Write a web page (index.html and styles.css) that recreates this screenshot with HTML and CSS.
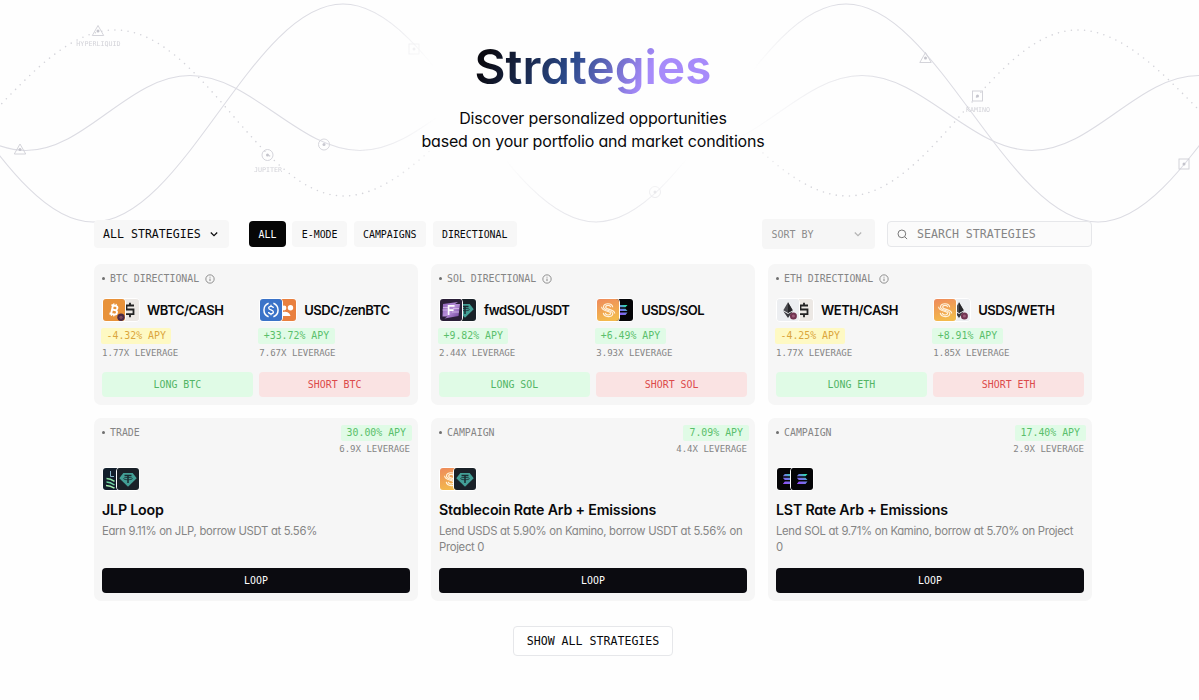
FILE: index.html
```html
<!DOCTYPE html>
<html lang="en">
<head>
  <meta charset="UTF-8">
  <meta name="viewport" content="width=device-width, initial-scale=1">
  <title>Strategies</title>
  <link rel="stylesheet" href="styles.css">
</head>
<body>
  <!-- Icon sprite -->
  <svg class="sprite" aria-hidden="true">
    <defs>
      <linearGradient id="g-sol" x1="0" y1="1" x2="1" y2="0">
        <stop offset="0" stop-color="#9945ff"/>
        <stop offset="0.55" stop-color="#6b7fe0"/>
        <stop offset="1" stop-color="#19fb9b"/>
      </linearGradient>
      <linearGradient id="g-usds" x1="0" y1="0" x2="0.3" y2="1">
        <stop offset="0" stop-color="#ee8a5c"/>
        <stop offset="1" stop-color="#f3b94c"/>
      </linearGradient>
      <linearGradient id="g-fwd" x1="0" y1="0" x2="1" y2="1">
        <stop offset="0" stop-color="#8d62b8"/>
        <stop offset="0.5" stop-color="#b78fd8"/>
        <stop offset="1" stop-color="#6b3d98"/>
      </linearGradient>
    </defs>
    <symbol id="t-btc" viewBox="0 0 22 22">
      <rect width="22" height="22" fill="#e8923a"/>
      <g fill="none" stroke="#fff" stroke-width="1.9" transform="rotate(12 11 11)">
        <path d="M7.5 6.6h4.3a2.1 2.1 0 0 1 0 4.3H9.2h3a2.2 2.2 0 0 1 0 4.5H7.3M9 6.5v9"/>
        <path d="M9.6 4.6v2M12 4.6v2M9.6 15.4v2M12 15.4v2" stroke-width="1.2"/>
      </g>
      <circle cx="18" cy="18.3" r="3.7" fill="#4a2a45"/>
      <circle cx="18" cy="18.3" r="1.6" fill="#7d4a5c"/>
    </symbol>
    <symbol id="t-cash" viewBox="0 0 22 22">
      <rect width="22" height="22" fill="#ece8e4"/>
      <path d="M17 6.500H9.500v4h7v4.700H8.500M13 3.800v2.700M13 15.200v3M8.500 10.500h3" fill="none" stroke="#222" stroke-width="1.800"/>
    </symbol>
    <symbol id="t-usdc" viewBox="0 0 22 22">
      <rect width="22" height="22" fill="#3b73c8"/>
      <g fill="none" stroke="#fff" stroke-width="1.5">
        <path d="M8.600 4.200a7.300 7.300 0 0 0 0 13.600M13.400 4.200a7.300 7.300 0 0 1 0 13.600"/>
        <path d="M13.300 9c0-2.300-4.600-2.300-4.600 0 0 2.400 4.700 1.500 4.700 4 0 2.400-4.800 2.400-4.800 0M11 5.800v1.500M11 14.700v1.500" stroke-width="1.300"/>
      </g>
    </symbol>
    <symbol id="t-zen" viewBox="0 0 22 22">
      <rect width="22" height="22" fill="#e9803f"/>
      <g fill="#fff">
        <circle cx="10" cy="9" r="2.400"/>
        <circle cx="16.500" cy="8.800" r="2.700"/>
        <path d="M6 17c0-4.500 7-6 9.500-2.200L16.500 17z"/>
      </g>
    </symbol>
    <symbol id="t-fwd" viewBox="0 0 22 22">
      <rect width="22" height="22" fill="#2b1f38"/>
      <path d="M3 5l15-2-3 2h5l-1.500 12-14 2.500 3-2H2.500z" fill="url(#g-fwd)"/>
      <path d="M3 8.500h5M2.500 11h5M13 9.500h6M12 13h7" stroke="#e2cdf2" stroke-width="0.700"/>
      <path d="M8.600 16V6.900h6M8.600 11.200h5" fill="none" stroke="#fff" stroke-width="1.700"/>
    </symbol>
    <symbol id="t-usdt" viewBox="0 0 22 22">
      <rect width="22" height="22" fill="#1a2128"/>
      <path d="M6.300 5h9.400l4 5.300L11 18.800l-8.700-8.500z" fill="#439f96"/>
      <path d="M7.500 7.600h7M11 7.600v7.300" stroke="#1a2b31" stroke-width="1.500"/>
      <ellipse cx="11" cy="10.600" rx="4.400" ry="1.200" fill="none" stroke="#1a2b31" stroke-width="0.800"/>
    </symbol>
    <symbol id="t-usds" viewBox="0 0 22 22">
      <rect width="22" height="22" fill="url(#g-usds)"/>
      <g fill="none" stroke="#fff2dc" stroke-width="1.150">
        <path d="M15.700 8.200C15.200 3.700 6.500 3.700 6.500 8c0 4.100 9.300 3 9.300 6.700 0 4-9 3.900-9.500-.8"/>
        <path d="M13.700 8.200c-.5-2.500-5-2.400-5 0 0 2.700 9 1.800 9 6.300M4.600 7.800c0 5 9 4 9 6.500 0 2.300-4.900 2.300-5.300-.4"/>
      </g>
    </symbol>
    <symbol id="t-sol" viewBox="0 0 22 22">
      <rect width="22" height="22" fill="#050507"/>
      <path d="M7.800 6h8.700l-2 2.300H5.800zM5.800 9.800h8.700l2 2.300H7.800zM7.800 13.600h8.700l-2 2.300H5.800z" fill="url(#g-sol)"/>
    </symbol>
    <symbol id="t-eth" viewBox="0 0 22 22">
      <rect width="22" height="22" fill="#eceef1"/>
      <path d="M11 3.300l4.700 8L11 14l-4.700-2.700z" fill="#4a4a4f"/>
      <path d="M11 3.300V14l4.700-2.700z" fill="#26262a"/>
      <path d="M6.300 12.300L11 15l4.700-2.700L11 19z" fill="#3a3a40"/>
      <circle cx="16.400" cy="17" r="3.500" fill="#713451"/>
      <circle cx="16.400" cy="17" r="1.500" fill="#9c5a78"/>
    </symbol>
    <symbol id="t-jlp" viewBox="0 0 22 22">
      <rect width="22" height="22" fill="#131f2c"/>
      <path d="M7.500 3v5.500h3.500" fill="none" stroke="#86b3c8" stroke-width="1"/>
      <g fill="none" stroke-width="1.500">
        <path d="M3.500 10.500c3 0 5 .8 8 2.800" stroke="#8fe3a4"/>
        <path d="M3.500 14c3 0 5 1 8 3" stroke="#6fd7a5"/>
        <path d="M3 17.500c3 0 5.500.800 8.500 2.700" stroke="#a3ecae"/>
      </g>
    </symbol>
    <symbol id="i-info" viewBox="0 0 12 12">
      <circle cx="6" cy="6" r="5" fill="none" stroke="currentColor" stroke-width="1.100"/>
      <path d="M6 5.500v3M6 3.300v1" stroke="currentColor" stroke-width="1.200"/>
    </symbol>
    <symbol id="i-chevron" viewBox="0 0 10 10">
      <path d="M1.800 3.500L5 6.700l3.200-3.200" fill="none" stroke="currentColor" stroke-width="1.200"/>
    </symbol>
    <symbol id="m-triangle" viewBox="-8 -8 16 16">
      <path d="M0-5.500L5.700 4.500H-5.700z"/>
      <circle class="dot" r="1.500"/>
    </symbol>
    <symbol id="m-circle" viewBox="-8 -8 16 16">
      <circle r="5.500"/>
      <circle class="dot" r="1.500"/>
    </symbol>
    <symbol id="m-square" viewBox="-8 -8 16 16">
      <rect x="-5" y="-5" width="10" height="10"/>
      <circle class="dot" r="1.500"/>
    </symbol>
  </svg>

  <!-- Background waves -->
  <svg class="waves" viewBox="0 0 1199 240" aria-hidden="true">
    <path d="M-158 4C-67 4 2 222 93 222S252 4 343 4S505 222 596 222S755 4 846 4S1007 222 1098 222S1258 4 1349 4"/>
    <path d="M-146 75.500C-85 75.500-33 150.500 26 150.500S129 75.500 190 75.500S299 150.500 360 150.500S465 75.500 526 75.500S633 150.500 694 150.500S801 75.500 862 75.500S971 150.500 1032 150.500S1138 75.500 1199 75.500"/>
    <path class="dotted" d="M-130 196C-42 196 28 30 115 30S260 196 344 196S509 30 596 30S761 196 847 196S992 30 1078 30S1240 196 1324 196"/>
    <g class="markers">
      <use href="#m-triangle" x="90" y="23" width="16" height="16"/>
      <use href="#m-triangle" x="12" y="141.500" width="16" height="16"/>
      <use href="#m-circle" x="259.500" y="147" width="16" height="16"/>
      <use href="#m-circle" x="316" y="136.500" width="16" height="16"/>
      <use href="#m-square" x="406" y="41" width="16" height="16"/>
      <use href="#m-square" x="594" y="23" width="16" height="16"/>
      <use href="#m-circle" x="647" y="184" width="16" height="16"/>
      <use href="#m-triangle" x="917.500" y="50" width="16" height="16"/>
      <use href="#m-square" x="969.500" y="88" width="16" height="16"/>
      <use href="#m-square" x="1176" y="156" width="16" height="16"/>
    </g>
    <text x="98.500" y="46.300">HYPERLIQUID</text>
    <text x="268" y="171.800">JUPITER</text>
    <text x="978" y="112">KAMINO</text>
  </svg>

  <main class="page">
    <header class="hero">
      <h1>Strategies</h1>
      <p>Discover personalized opportunities<br>based on your portfolio and market conditions</p>
    </header>

    <div class="toolbar">
      <button class="select">ALL STRATEGIES <svg class="chevron"><use href="#i-chevron"/></svg></button>
      <div class="chips">
        <button class="chip active">ALL</button>
        <button class="chip">E-MODE</button>
        <button class="chip">CAMPAIGNS</button>
        <button class="chip">DIRECTIONAL</button>
      </div>
      <button class="sort">SORT BY <svg class="chevron"><use href="#i-chevron"/></svg></button>
      <div class="search">
        <svg class="glass" viewBox="0 0 12 12"><circle cx="5.300" cy="5.300" r="4.200"/><path d="M8.500 8.500L11 11"/></svg>
        <span>SEARCH STRATEGIES</span>
      </div>
    </div>

    <section class="grid">
      <article class="card">
        <div class="tag">BTC DIRECTIONAL <svg class="info"><use href="#i-info"/></svg></div>
        <div class="sides">
          <div class="side">
            <div class="pair">
              <div class="tokens"><svg><use href="#t-btc"/></svg><svg><use href="#t-cash"/></svg></div>
              <span>WBTC/CASH</span>
            </div>
            <span class="apy warn">-4.32% APY</span>
            <span class="leverage">1.77X LEVERAGE</span>
            <button class="btn long">LONG BTC</button>
          </div>
          <div class="side">
            <div class="pair">
              <div class="tokens"><svg><use href="#t-usdc"/></svg><svg><use href="#t-zen"/></svg></div>
              <span>USDC/zenBTC</span>
            </div>
            <span class="apy">+33.72% APY</span>
            <span class="leverage">7.67X LEVERAGE</span>
            <button class="btn short">SHORT BTC</button>
          </div>
        </div>
      </article>

      <article class="card">
        <div class="tag">SOL DIRECTIONAL <svg class="info"><use href="#i-info"/></svg></div>
        <div class="sides">
          <div class="side">
            <div class="pair">
              <div class="tokens"><svg><use href="#t-fwd"/></svg><svg><use href="#t-usdt"/></svg></div>
              <span>fwdSOL/USDT</span>
            </div>
            <span class="apy">+9.82% APY</span>
            <span class="leverage">2.44X LEVERAGE</span>
            <button class="btn long">LONG SOL</button>
          </div>
          <div class="side">
            <div class="pair">
              <div class="tokens"><svg><use href="#t-usds"/></svg><svg><use href="#t-sol"/></svg></div>
              <span>USDS/SOL</span>
            </div>
            <span class="apy">+6.49% APY</span>
            <span class="leverage">3.93X LEVERAGE</span>
            <button class="btn short">SHORT SOL</button>
          </div>
        </div>
      </article>

      <article class="card">
        <div class="tag">ETH DIRECTIONAL <svg class="info"><use href="#i-info"/></svg></div>
        <div class="sides">
          <div class="side">
            <div class="pair">
              <div class="tokens"><svg><use href="#t-eth"/></svg><svg><use href="#t-cash"/></svg></div>
              <span>WETH/CASH</span>
            </div>
            <span class="apy warn">-4.25% APY</span>
            <span class="leverage">1.77X LEVERAGE</span>
            <button class="btn long">LONG ETH</button>
          </div>
          <div class="side">
            <div class="pair">
              <div class="tokens"><svg><use href="#t-usds"/></svg><svg><use href="#t-eth"/></svg></div>
              <span>USDS/WETH</span>
            </div>
            <span class="apy">+8.91% APY</span>
            <span class="leverage">1.85X LEVERAGE</span>
            <button class="btn short">SHORT ETH</button>
          </div>
        </div>
      </article>

      <article class="card loop">
        <div class="card-top">
          <div class="tag">TRADE</div>
          <div class="stats">
            <span class="apy">30.00% APY</span>
            <span class="leverage">6.9X LEVERAGE</span>
          </div>
        </div>
        <div class="tokens"><svg><use href="#t-jlp"/></svg><svg><use href="#t-usdt"/></svg></div>
        <h2>JLP Loop</h2>
        <p>Earn 9.11% on JLP, borrow USDT at 5.56%</p>
        <button class="btn dark">LOOP</button>
      </article>

      <article class="card loop">
        <div class="card-top">
          <div class="tag">CAMPAIGN</div>
          <div class="stats">
            <span class="apy">7.09% APY</span>
            <span class="leverage">4.4X LEVERAGE</span>
          </div>
        </div>
        <div class="tokens"><svg><use href="#t-usds"/></svg><svg><use href="#t-usdt"/></svg></div>
        <h2>Stablecoin Rate Arb + Emissions</h2>
        <p>Lend USDS at 5.90% on Kamino, borrow USDT at 5.56% on Project 0</p>
        <button class="btn dark">LOOP</button>
      </article>

      <article class="card loop">
        <div class="card-top">
          <div class="tag">CAMPAIGN</div>
          <div class="stats">
            <span class="apy">17.40% APY</span>
            <span class="leverage">2.9X LEVERAGE</span>
          </div>
        </div>
        <div class="tokens"><svg><use href="#t-sol"/></svg><svg><use href="#t-sol"/></svg></div>
        <h2>LST Rate Arb + Emissions</h2>
        <p>Lend SOL at 9.71% on Kamino, borrow at 5.70% on Project 0</p>
        <button class="btn dark">LOOP</button>
      </article>
    </section>

    <button class="show-all">SHOW ALL STRATEGIES</button>
  </main>
</body>
</html>
```

FILE: styles.css
```css
* {
  box-sizing: border-box;
}

body {
  margin: 0;
  height: 700px;
  overflow: hidden;
  background: #fefefe;
  color: #09090b;
  font-family: Inter, sans-serif;
  font-feature-settings: "cv11";
}

h1, h2, p {
  margin: 0;
}

button {
  border: none;
  padding: 0;
  color: inherit;
}

button,
.search,
.tag,
.apy,
.leverage {
  font-family: "DejaVu Sans Mono", monospace;
  font-feature-settings: normal;
  white-space: nowrap;
}

.sprite {
  position: absolute;
  width: 0;
  height: 0;
}

/* Background */
.waves {
  position: absolute;
  top: 0;
  left: 0;
  width: 1199px;
  height: 240px;
  fill: none;
  stroke: #dcdce3;
  stroke-width: 1.1;
  -webkit-mask-image: radial-gradient(ellipse 300px 150px at 593px 90px, transparent 55%, #000 100%);
  mask-image: radial-gradient(ellipse 300px 150px at 593px 90px, transparent 55%, #000 100%);
}

.waves .dotted {
  stroke: #d4d4da;
  stroke-width: 1.6;
  stroke-dasharray: 0 6.6;
  stroke-linecap: round;
}

.markers {
  stroke: #cfcfd6;
  stroke-width: 0.9;
}

.dot {
  fill: #c4c4cc;
  stroke: none;
}

.waves text {
  fill: #d2d2d8;
  stroke: none;
  font: 6.7px "DejaVu Sans Mono", monospace;
  text-anchor: middle;
}

/* Content */
.page {
  position: relative;
  width: 998px;
  margin-left: 94px;
  display: flex;
  flex-direction: column;
}

.hero {
  height: 219px;
  padding-top: 38px;
  text-align: center;
}

.hero h1 {
  width: fit-content;
  margin: 0 auto;
  font-size: 47.7px;
  line-height: 58px;
  font-weight: 600;
  background: linear-gradient(115deg, #0a0a12 8%, #2b4a8c 42%, #a78bfa 72%);
  -webkit-background-clip: text;
  background-clip: text;
  color: transparent;
}

.hero p {
  margin-top: 11px;
  font-size: 16px;
  line-height: 22.5px;
  letter-spacing: -0.16px;
}

.toolbar {
  height: 30px;
  display: flex;
  align-items: center;
}

.select {
  display: flex;
  align-items: center;
  justify-content: space-between;
  width: 135px;
  height: 28px;
  padding: 0 10px 0 9px;
  border-radius: 4px;
  background: #f7f7f7;
  font-size: 11.6px;
}

.chevron {
  width: 10px;
  height: 10px;
}

.chips {
  display: flex;
  gap: 6.5px;
  margin-left: 20px;
}

.chip {
  height: 26px;
  padding: 0 9.5px;
  border-radius: 4px;
  background: #f7f7f7;
  font-size: 9.9px;
}

.chip.active {
  background: #060606;
  color: #fff;
}

.sort {
  display: flex;
  align-items: center;
  justify-content: space-between;
  width: 113px;
  height: 30px;
  margin-left: auto;
  padding: 0 12px 0 10px;
  border-radius: 4px;
  background: #f6f6f6;
  color: #8c8c8c;
  font-size: 10px;
}

.sort .chevron {
  color: #b4b4b4;
}

.search {
  display: flex;
  align-items: center;
  gap: 9px;
  width: 205px;
  height: 26px;
  margin-left: 12.5px;
  padding: 0 9px;
  border: 1px solid #e6e7ea;
  border-radius: 4px;
  background: #fbfbfb;
  color: #858585;
  font-size: 11.6px;
}

.glass {
  width: 11px;
  height: 11px;
  fill: none;
  stroke: #6b6b6b;
}

.grid {
  display: grid;
  grid-template-columns: repeat(3, 1fr);
  gap: 13px;
  margin-top: 15px;
}

.card {
  height: 141px;
  padding: 8px;
  border-radius: 7px;
  background: #f6f6f6;
}

.tag {
  display: flex;
  align-items: center;
  height: 13px;
  color: #858585;
  font-size: 9.9px;
}

.tag::before {
  content: "";
  width: 3px;
  height: 3px;
  margin: 0 5px 0 0;
  border-radius: 50%;
  background: #6f6f6f;
}

.info {
  width: 10px;
  height: 10px;
  margin-left: 6px;
}

.sides {
  display: grid;
  grid-template-columns: 1fr 1fr;
  gap: 6.5px;
  margin-top: 12px;
}

.side {
  display: flex;
  flex-direction: column;
  align-items: flex-start;
}

.pair {
  display: flex;
  align-items: center;
  gap: 7px;
  height: 25px;
  font-size: 13px;
  font-weight: 600;
  letter-spacing: -0.45px;
}

.tokens {
  display: flex;
}

.tokens svg {
  width: 24px;
  height: 24px;
  border: 1px solid #fff;
  border-radius: 4px;
}

.tokens svg:first-child {
  z-index: 1;
}

.tokens svg + svg {
  margin-left: -10px;
}

.loop .tokens svg:first-child {
  z-index: auto;
}

.apy {
  height: 16px;
  margin: 6px 0 0 -1px;
  padding: 0 5.5px;
  border-radius: 2px;
  background: #e0fbe6;
  color: #5abf6b;
  font-size: 9.9px;
  line-height: 16px;
}

.apy.warn {
  background: #fef9c3;
  color: #dba63c;
}

.leverage {
  margin-top: 3px;
  color: #858585;
  font-size: 9.05px;
  line-height: 12px;
}

.btn {
  width: 100%;
  height: 25.5px;
  border-radius: 4px;
  font-size: 9.9px;
}

.side .btn {
  margin-top: 12.5px;
}

.long {
  background: #e0fbe6;
  color: #52b565;
}

.short {
  background: #fae3e3;
  color: #dc4a4a;
}

.dark {
  margin-top: auto;
  background: #0b0b10;
  color: #fff;
}

.loop {
  display: flex;
  flex-direction: column;
  height: 183px;
}

.card-top {
  display: flex;
  justify-content: space-between;
  height: 41px;
}

.stats {
  display: flex;
  flex-direction: column;
  align-items: flex-end;
}

.stats .apy {
  margin: -1.5px -2px 0 0;
  padding: 0 6px;
}

.stats .leverage {
  margin-top: 2px;
}

.loop h2 {
  margin-top: 9px;
  font-size: 14.2px;
  line-height: 20px;
  font-weight: 600;
  letter-spacing: -0.18px;
}

.loop p {
  margin-top: 3px;
  padding-right: 3.5px;
  color: #858585;
  font-size: 11.3px;
  line-height: 16px;
  letter-spacing: -0.3px;
}

.show-all {
  width: 160px;
  height: 30px;
  margin: 25px auto 0;
  border: 1px solid #e6e7ea;
  border-radius: 4px;
  background: #fff;
  font-size: 11.6px;
}
```
